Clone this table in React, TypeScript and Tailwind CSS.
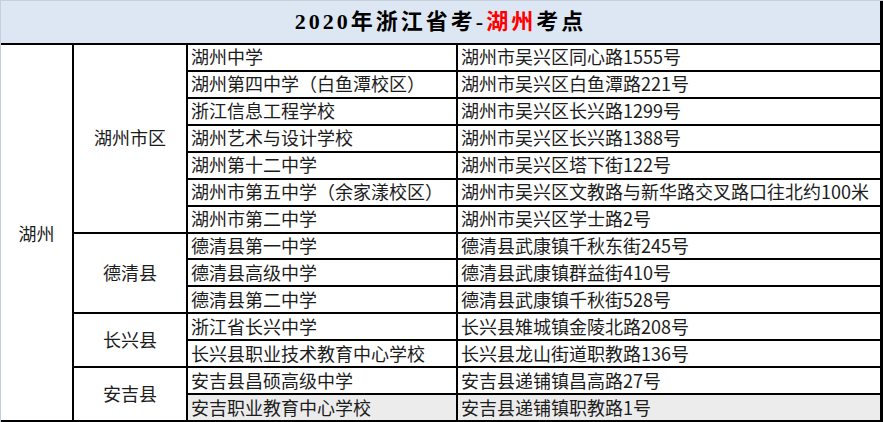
import React from "react";

interface School {
  name: string;
  address: string;
}

interface Area {
  name: string;
  span: string;
  schools: School[];
}

const areas: Area[] = [
  {
    name: "湖州市区",
    span: "row-span-7",
    schools: [
      { name: "湖州中学", address: "湖州市吴兴区同心路1555号" },
      { name: "湖州第四中学（白鱼潭校区）", address: "湖州市吴兴区白鱼潭路221号" },
      { name: "浙江信息工程学校", address: "湖州市吴兴区长兴路1299号" },
      { name: "湖州艺术与设计学校", address: "湖州市吴兴区长兴路1388号" },
      { name: "湖州第十二中学", address: "湖州市吴兴区塔下街122号" },
      { name: "湖州市第五中学（余家漾校区）", address: "湖州市吴兴区文教路与新华路交叉路口往北约100米" },
      { name: "湖州市第二中学", address: "湖州市吴兴区学士路2号" },
    ],
  },
  {
    name: "德清县",
    span: "row-span-3",
    schools: [
      { name: "德清县第一中学", address: "德清县武康镇千秋东街245号" },
      { name: "德清县高级中学", address: "德清县武康镇群益街410号" },
      { name: "德清县第二中学", address: "德清县武康镇千秋街528号" },
    ],
  },
  {
    name: "长兴县",
    span: "row-span-2",
    schools: [
      { name: "浙江省长兴中学", address: "长兴县雉城镇金陵北路208号" },
      { name: "长兴县职业技术教育中心学校", address: "长兴县龙山街道职教路136号" },
    ],
  },
  {
    name: "安吉县",
    span: "row-span-2",
    schools: [
      { name: "安吉县昌硕高级中学", address: "安吉县递铺镇昌高路27号" },
      { name: "安吉职业教育中心学校", address: "安吉县递铺镇职教路1号" },
    ],
  },
];

export default function App() {
  const lastArea = areas.length - 1;

  return (
    <div className="w-[883px] h-[422px] bg-white border-l border-t border-[#c5cfdc] font-['Noto_Sans_CJK_SC',sans-serif] text-[18px] text-[#1c1c1c]">
      <div className="h-[42px] bg-[#dde7f3] border-r-[3px] border-black flex items-center justify-center">
        <span className="font-['Liberation_Serif','Noto_Sans_CJK_SC',serif] font-bold text-[22px] tracking-[3px] text-black leading-none">
          2020年浙江省考-<span className="text-[#ff0000]">湖州</span>考点
        </span>
      </div>

      <div className="grid grid-cols-[71px_112px_268px_422px] grid-rows-[repeat(14,minmax(0,1fr))] gap-[2px] bg-black pt-[2px] pr-[3px] pb-[2px] h-[379px] leading-none">
        <div className="row-span-14 col-start-1 bg-white flex items-center justify-center">湖州</div>
        {areas.map((area, ai) => (
          <React.Fragment key={area.name}>
            <div className={`${area.span} col-start-2 bg-white flex items-center justify-center pb-[2px]`}>
              {area.name}
            </div>
            {area.schools.map((s, si) => {
              const shaded = ai === lastArea && si === area.schools.length - 1;
              return (
                <React.Fragment key={s.name}>
                  <div className={`col-start-3 flex items-center pl-[3px] pb-[2px] whitespace-nowrap ${shaded ? "bg-[#ececec]" : "bg-white"}`}>
                    {s.name}
                  </div>
                  <div className={`col-start-4 flex items-center pl-[3px] pb-[2px] whitespace-nowrap ${shaded ? "bg-[#ececec]" : "bg-white"}`}>
                    {s.address}
                  </div>
                </React.Fragment>
              );
            })}
          </React.Fragment>
        ))}
      </div>
    </div>
  );
}
